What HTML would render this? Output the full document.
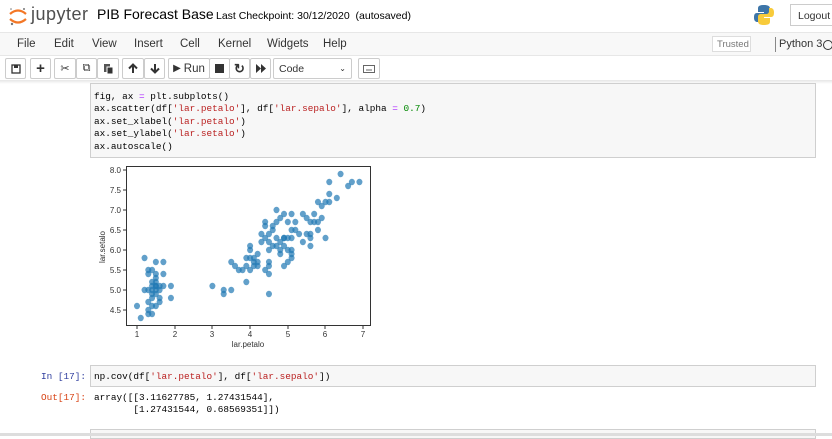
<!DOCTYPE html>
<html><head><meta charset="utf-8"><style>
*{margin:0;padding:0;box-sizing:border-box}
body{width:832px;height:436px;overflow:hidden;background:#fff;font-family:"Liberation Sans",sans-serif;position:relative;color:#000}
.a{position:absolute}
.menu span{position:absolute;top:38px;font-size:11.5px;color:#333}
.btn{position:absolute;top:58px;height:21px;border:1px solid #ccc;background:#fff;border-radius:2px;font-size:11px;color:#333;display:flex;align-items:center;justify-content:center}
.code{font-family:"Liberation Mono",monospace;font-size:9.4px;line-height:12.4px;white-space:pre;color:#000}
.s{color:#ba2121}.o{color:#aa22ff}.n{color:#080}
</style></head><body>
<!-- header -->
<svg class="a" style="left:8px;top:6px" width="20" height="20" viewBox="0 0 20 20">
<path d="M2 8 Q10 1 18 8" stroke="#f37726" stroke-width="2.2" fill="none"/>
<path d="M2 13 Q10 20 18 13" stroke="#f37726" stroke-width="2.2" fill="none"/>
<circle cx="4" cy="18" r="1.2" fill="#767677"/><circle cx="16" cy="3" r="1" fill="#767677"/><circle cx="3" cy="3" r="0.8" fill="#767677"/>
</svg>
<div class="a" style="left:31px;top:4px;font-size:18px;color:#4e4e4e;letter-spacing:0.5px">jupyter</div>
<div class="a" style="left:97px;top:6px;font-size:14px;color:#000;white-space:nowrap">PIB Forecast Base</div>
<div class="a" style="left:216px;top:10px;font-size:10.5px;color:#000;white-space:nowrap">Last Checkpoint: 30/12/2020 &nbsp;(autosaved)</div>
<svg class="a" style="left:753px;top:4px" width="22" height="22" viewBox="0 0 22 22">
<path d="M11 1 C5 1 5 3 5 5 V8 H11 V9 H4 C1 9 1 12 1 14 C1 17 3 18 4 18 H6 V15 C6 13 7 12 9 12 H14 C16 12 17 11 17 9 V5 C17 2 15 1 11 1Z" fill="#3d75a8"/>
<path d="M11 21 C17 21 17 19 17 17 V14 H11 V13 H18 C21 13 21 10 21 8 C21 5 19 4 18 4 H16 V7 C16 9 15 10 13 10 H8 C6 10 5 11 5 13 V17 C5 20 7 21 11 21Z" fill="#f8cb3b"/>
</svg>
<div class="a" style="left:790px;top:4px;width:42px;height:22px;border:1px solid #ccc;border-right:none;font-size:10.5px;color:#333;padding:5px 0 0 7px">Logout</div>
<!-- menubar -->
<div class="a" style="left:0;top:32px;width:832px;height:24px;background:#f8f8f8;border-top:1px solid #e7e7e7;border-bottom:1px solid #e7e7e7"></div>
<div class="menu"><span style="left:17px">File</span><span style="left:54px">Edit</span><span style="left:92px">View</span><span style="left:134px">Insert</span><span style="left:180px">Cell</span><span style="left:218px">Kernel</span><span style="left:267px">Widgets</span><span style="left:323px">Help</span></div>
<div class="a" style="left:712px;top:36px;width:39px;height:16px;border:1px solid #ddd;background:#fff;font-size:9.5px;color:#777;padding:2px 0 0 4px">Trusted</div>
<div class="a" style="left:775px;top:37px;width:1px;height:15px;background:#888"></div>
<div class="a" style="left:779px;top:38px;font-size:11px;color:#333;white-space:nowrap">Python 3</div>
<div class="a" style="left:823px;top:40px;width:10px;height:10px;border:1.5px solid #333;border-radius:50%"></div>
<!-- toolbar -->
<div class="btn" style="left:5px;width:21px"><svg width="10" height="10"><rect x="1" y="1" width="8" height="8" fill="none" stroke="#333" stroke-width="1.3"/><rect x="3" y="1" width="4" height="3" fill="#333"/></svg></div>
<div class="btn" style="left:30px;width:21px;font-size:15px;font-weight:bold">+</div>
<div class="btn" style="left:54px;width:22px;font-size:11px">✂</div>
<div class="btn" style="left:76px;width:21px;font-size:11px">⧉</div>
<div class="btn" style="left:97px;width:22px"><svg width="10" height="11"><rect x="1" y="1" width="6" height="8" fill="#555"/><rect x="4" y="4" width="6" height="7" fill="#333" stroke="#fff"/></svg></div>
<div class="btn" style="left:122px;width:22px"><svg width="10" height="11"><path d="M5 10V2M1 5.5L5 1.5L9 5.5" stroke="#333" stroke-width="2" fill="none"/></svg></div>
<div class="btn" style="left:144px;width:21px"><svg width="10" height="11"><path d="M5 1V9M1 5.5L5 9.5L9 5.5" stroke="#333" stroke-width="2" fill="none"/></svg></div>
<div class="btn" style="left:168px;width:42px;font-size:11.5px"><span style="font-size:10px;margin-right:3px">▶</span>Run</div>
<div class="btn" style="left:209px;width:21px"><div style="width:9px;height:9px;background:#333"></div></div>
<div class="btn" style="left:229px;width:21px;font-size:13px;font-weight:bold">↻</div>
<div class="btn" style="left:250px;width:21px"><svg width="10" height="9"><path d="M0 0L5 4.5L0 9ZM5 0L10 4.5L5 9Z" fill="#333"/></svg></div>
<div class="btn" style="left:273px;width:79px;justify-content:space-between;padding:0 5px;font-size:10.5px"><span>Code</span><span style="font-size:8px">⌄</span></div>
<div class="btn" style="left:358px;width:22px"><svg width="12" height="8"><rect x="0.5" y="0.5" width="11" height="7" fill="none" stroke="#666"/><line x1="3" y1="5" x2="9" y2="5" stroke="#666"/></svg></div>
<div class="a" style="left:0;top:80px;width:832px;height:4px;background:linear-gradient(#e6e6e6,#fff)"></div>
<!-- code cell -->
<div class="a" style="left:90px;top:83px;width:726px;height:75px;background:#f7f7f7;border:1px solid #cfcfcf"></div>
<div class="a code" style="left:94px;top:91px">fig, ax <span class="o">=</span> plt.subplots()
ax.scatter(df[<span class="s">'lar.petalo'</span>], df[<span class="s">'lar.sepalo'</span>], alpha <span class="o">=</span> <span class="n">0.7</span>)
ax.set_xlabel(<span class="s">'lar.petalo'</span>)
ax.set_ylabel(<span class="s">'lar.setalo'</span>)
ax.autoscale()</div>
<!-- plot -->
<svg class="a" style="left:0;top:0" width="832" height="436" font-family="Liberation Sans, sans-serif" font-size="8" fill="#333">
<rect x="126.5" y="166.5" width="244" height="159" fill="#fff" stroke="#333" stroke-width="1"/>
<g stroke="#333" stroke-width="1">
<line x1="137" y1="326" x2="137" y2="329"/><line x1="175" y1="326" x2="175" y2="329"/><line x1="212" y1="326" x2="212" y2="329"/><line x1="250" y1="326" x2="250" y2="329"/><line x1="288" y1="326" x2="288" y2="329"/><line x1="325" y1="326" x2="325" y2="329"/><line x1="363" y1="326" x2="363" y2="329"/>
<line x1="123" y1="170" x2="126" y2="170"/><line x1="123" y1="190" x2="126" y2="190"/><line x1="123" y1="210" x2="126" y2="210"/><line x1="123" y1="230" x2="126" y2="230"/><line x1="123" y1="250" x2="126" y2="250"/><line x1="123" y1="270" x2="126" y2="270"/><line x1="123" y1="290" x2="126" y2="290"/><line x1="123" y1="310" x2="126" y2="310"/>
</g>
<g text-anchor="middle"><text x="137" y="337">1</text><text x="175" y="337">2</text><text x="212" y="337">3</text><text x="250" y="337">4</text><text x="288" y="337">5</text><text x="325" y="337">6</text><text x="363" y="337">7</text></g>
<g text-anchor="end"><text x="121" y="173">8.0</text><text x="121" y="193">7.5</text><text x="121" y="213">7.0</text><text x="121" y="233">6.5</text><text x="121" y="253">6.0</text><text x="121" y="273">5.5</text><text x="121" y="293">5.0</text><text x="121" y="313">4.5</text></g>
<text x="248" y="347" text-anchor="middle">lar.petalo</text>
<text transform="translate(105,247) rotate(-90)" text-anchor="middle">lar.setalo</text>
<g transform="translate(99.3,490) scale(37.7,-40)" fill="#1f77b4" fill-opacity="0.7">
<circle cx="1.4" cy="5.1" r=".08"/><circle cx="1.4" cy="4.9" r=".08"/><circle cx="1.3" cy="4.7" r=".08"/><circle cx="1.5" cy="4.6" r=".08"/><circle cx="1.4" cy="5.0" r=".08"/><circle cx="1.7" cy="5.4" r=".08"/><circle cx="1.4" cy="4.6" r=".08"/><circle cx="1.5" cy="5.0" r=".08"/><circle cx="1.4" cy="4.4" r=".08"/><circle cx="1.5" cy="4.9" r=".08"/><circle cx="1.5" cy="5.4" r=".08"/><circle cx="1.6" cy="4.8" r=".08"/><circle cx="1.4" cy="4.8" r=".08"/><circle cx="1.1" cy="4.3" r=".08"/><circle cx="1.2" cy="5.8" r=".08"/><circle cx="1.5" cy="5.7" r=".08"/><circle cx="1.3" cy="5.4" r=".08"/><circle cx="1.7" cy="5.7" r=".08"/><circle cx="1.5" cy="5.1" r=".08"/><circle cx="1.0" cy="4.6" r=".08"/><circle cx="1.7" cy="5.1" r=".08"/><circle cx="1.9" cy="4.8" r=".08"/><circle cx="1.6" cy="5.0" r=".08"/><circle cx="1.5" cy="5.2" r=".08"/><circle cx="1.4" cy="5.2" r=".08"/><circle cx="1.6" cy="4.7" r=".08"/><circle cx="1.3" cy="5.5" r=".08"/><circle cx="1.2" cy="5.0" r=".08"/><circle cx="1.3" cy="4.4" r=".08"/><circle cx="1.3" cy="5.0" r=".08"/><circle cx="1.3" cy="4.5" r=".08"/><circle cx="1.9" cy="5.1" r=".08"/><circle cx="1.5" cy="5.3" r=".08"/><circle cx="1.4" cy="5.5" r=".08"/><circle cx="1.5" cy="5.1" r=".08"/><circle cx="1.6" cy="5.1" r=".08"/>
<circle cx="4.7" cy="7.0" r=".08"/><circle cx="4.5" cy="6.4" r=".08"/><circle cx="4.9" cy="6.9" r=".08"/><circle cx="4.0" cy="5.5" r=".08"/><circle cx="4.6" cy="6.5" r=".08"/><circle cx="4.5" cy="5.7" r=".08"/><circle cx="4.7" cy="6.3" r=".08"/><circle cx="3.3" cy="4.9" r=".08"/><circle cx="4.6" cy="6.6" r=".08"/><circle cx="3.9" cy="5.2" r=".08"/><circle cx="3.5" cy="5.0" r=".08"/><circle cx="4.2" cy="5.9" r=".08"/><circle cx="4.0" cy="6.0" r=".08"/><circle cx="4.7" cy="6.1" r=".08"/><circle cx="3.6" cy="5.6" r=".08"/><circle cx="4.4" cy="6.7" r=".08"/><circle cx="4.5" cy="5.6" r=".08"/><circle cx="4.1" cy="5.8" r=".08"/><circle cx="4.5" cy="6.2" r=".08"/><circle cx="3.9" cy="5.6" r=".08"/><circle cx="4.8" cy="5.9" r=".08"/><circle cx="4.0" cy="6.1" r=".08"/><circle cx="4.9" cy="6.3" r=".08"/><circle cx="4.3" cy="6.4" r=".08"/><circle cx="4.4" cy="6.6" r=".08"/><circle cx="4.8" cy="6.8" r=".08"/><circle cx="5.0" cy="6.7" r=".08"/><circle cx="4.5" cy="6.0" r=".08"/><circle cx="3.5" cy="5.7" r=".08"/><circle cx="3.8" cy="5.5" r=".08"/><circle cx="3.7" cy="5.5" r=".08"/><circle cx="3.9" cy="5.8" r=".08"/><circle cx="5.1" cy="6.0" r=".08"/><circle cx="4.5" cy="5.4" r=".08"/><circle cx="4.7" cy="6.7" r=".08"/><circle cx="4.4" cy="6.3" r=".08"/><circle cx="4.1" cy="5.6" r=".08"/><circle cx="4.4" cy="5.5" r=".08"/><circle cx="4.6" cy="6.1" r=".08"/><circle cx="4.0" cy="5.8" r=".08"/><circle cx="3.3" cy="5.0" r=".08"/><circle cx="4.2" cy="5.6" r=".08"/><circle cx="4.2" cy="5.7" r=".08"/><circle cx="4.3" cy="6.2" r=".08"/><circle cx="3.0" cy="5.1" r=".08"/><circle cx="4.1" cy="5.7" r=".08"/>
<circle cx="6.0" cy="6.3" r=".08"/><circle cx="5.1" cy="5.8" r=".08"/><circle cx="5.9" cy="7.1" r=".08"/><circle cx="5.6" cy="6.3" r=".08"/><circle cx="5.8" cy="6.5" r=".08"/><circle cx="6.6" cy="7.6" r=".08"/><circle cx="4.5" cy="4.9" r=".08"/><circle cx="6.3" cy="7.3" r=".08"/><circle cx="5.8" cy="6.7" r=".08"/><circle cx="6.1" cy="7.2" r=".08"/><circle cx="5.1" cy="6.5" r=".08"/><circle cx="5.3" cy="6.4" r=".08"/><circle cx="5.5" cy="6.8" r=".08"/><circle cx="5.0" cy="5.7" r=".08"/><circle cx="6.7" cy="7.7" r=".08"/><circle cx="6.9" cy="7.7" r=".08"/><circle cx="5.0" cy="6.0" r=".08"/><circle cx="5.7" cy="6.9" r=".08"/><circle cx="4.9" cy="5.6" r=".08"/><circle cx="4.9" cy="6.3" r=".08"/><circle cx="5.7" cy="6.7" r=".08"/><circle cx="6.0" cy="7.2" r=".08"/><circle cx="4.8" cy="6.2" r=".08"/><circle cx="4.9" cy="6.1" r=".08"/><circle cx="5.6" cy="6.4" r=".08"/><circle cx="5.8" cy="7.2" r=".08"/><circle cx="6.1" cy="7.4" r=".08"/><circle cx="6.4" cy="7.9" r=".08"/><circle cx="5.1" cy="6.3" r=".08"/><circle cx="5.6" cy="6.1" r=".08"/><circle cx="6.1" cy="7.7" r=".08"/><circle cx="5.5" cy="6.4" r=".08"/><circle cx="4.8" cy="6.0" r=".08"/><circle cx="5.4" cy="6.9" r=".08"/><circle cx="5.6" cy="6.7" r=".08"/><circle cx="5.1" cy="6.9" r=".08"/><circle cx="5.9" cy="6.8" r=".08"/><circle cx="5.2" cy="6.7" r=".08"/><circle cx="5.0" cy="6.3" r=".08"/><circle cx="5.2" cy="6.5" r=".08"/><circle cx="5.4" cy="6.2" r=".08"/><circle cx="5.1" cy="5.9" r=".08"/>
</g>
</svg>
<!-- in cell -->
<div class="a code" style="left:41px;top:371px;color:#303f9f">In [17]:</div>
<div class="a" style="left:90px;top:365px;width:726px;height:22px;background:#f7f7f7;border:1px solid #cfcfcf"></div>
<div class="a code" style="left:94px;top:371px">np.cov(df[<span class="s">'lar.petalo'</span>], df[<span class="s">'lar.sepalo'</span>])</div>
<div class="a code" style="left:41px;top:392px;color:#d84315">Out[17]:</div>
<div class="a code" style="left:94px;top:392px">array([[3.11627785, 1.27431544],
       [1.27431544, 0.68569351]])</div>
<div class="a" style="left:90px;top:429px;width:726px;height:10px;background:#f7f7f7;border:1px solid #cfcfcf"></div>
<div class="a" style="left:0;top:433px;width:832px;height:3px;background:#ddd"></div>
</body></html>
